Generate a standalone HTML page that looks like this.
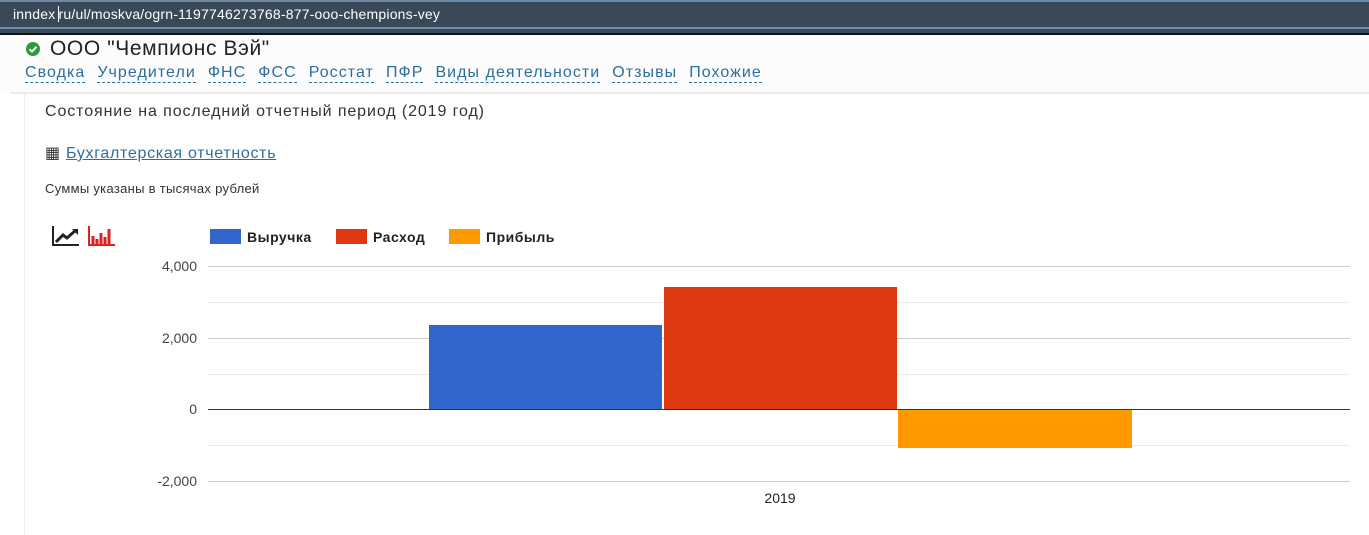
<!DOCTYPE html>
<html><head><meta charset="utf-8"><style>
body{margin:0;width:1369px;height:535px;overflow:hidden;background:#fff;font-family:"Liberation Sans","DejaVu Sans",sans-serif;position:relative}
.a{position:absolute;white-space:nowrap}
.nav a{color:#2d6f9e;text-decoration:none;border-bottom:1px dashed #2d6f9e;margin-right:12px;padding-bottom:1px}
</style></head><body>
<div class="a" style="left:0;top:0;width:1369px;height:2px;background:#6b8aa6"></div>
<div class="a" style="left:0;top:2px;width:1369px;height:25px;background:#3a4958"></div>
<div class="a" style="left:0;top:27px;width:1369px;height:2px;background:#6d8fae"></div>
<div class="a" style="left:0;top:29px;width:1369px;height:4px;background:#3a4958"></div>
<div class="a" style="left:0;top:33px;width:1369px;height:2px;background:#111"></div>
<div class="a" style="left:13px;top:6px;color:#fff;font-size:14px;letter-spacing:0.2px">inndex <span style="border-left:1px solid #fff;margin-left:-2px"></span>ru/ul/moskva/ogrn-1197746273768-877-ooo-chempions-vey</div>
<div class="a" style="left:0;top:35px;width:1369px;height:57px;background:#fcfcfc"></div>
<div class="a" style="left:10px;top:92px;width:1359px;height:2px;background:#ececec"></div>
<div class="a" style="left:24px;top:94px;width:1px;height:441px;background:#ececec"></div>
<div class="a" style="left:26px;top:42px;width:14px;height:14px;border-radius:50%;background:#2a9a3a"></div>
<svg class="a" style="left:26px;top:42px" width="14" height="14"><path d="M3.5 7.2L6 9.6L10.5 4.8" stroke="#fff" stroke-width="2" fill="none"/></svg>
<div class="a" style="left:50px;top:37px;font-size:21px;letter-spacing:0.6px;color:#222">ООО "Чемпионс Вэй"</div>
<div class="a nav" style="left:25px;top:64px;font-size:16px;letter-spacing:1.05px"><a>Сводка</a><a>Учредители</a><a>ФНС</a><a>ФСС</a><a>Росстат</a><a>ПФР</a><a>Виды деятельности</a><a>Отзывы</a><a>Похожие</a></div>
<div class="a" style="left:45px;top:103px;font-size:16px;letter-spacing:0.9px;color:#333">Состояние на последний отчетный период (2019 год)</div>
<div class="a" style="left:45px;top:143px;font-size:16px;letter-spacing:0.7px;color:#333">&#9638; <span style="color:#2d6f9e;text-decoration:underline">Бухгалтерская отчетность</span></div>
<div class="a" style="left:45px;top:181px;font-size:13px;letter-spacing:0.3px;color:#333">Суммы указаны в тысячах рублей</div>
<svg class="a" style="left:52px;top:225px" width="66" height="22">
<path d="M1 1V20H27" stroke="#222" stroke-width="2" fill="none"/><path d="M4 17L11 10L15 13L24 5" stroke="#222" stroke-width="3" fill="none"/><path d="M20 4H26V10Z" fill="#222"/>
<path d="M37 1V20H63" stroke="#d22" stroke-width="2" fill="none"/><path d="M41 11v8M45 14v5M49 8v11M53 12v7M57 4v15" stroke="#d22" stroke-width="3"/>
</svg>
<div class="a" style="left:210px;top:229px;width:31px;height:15px;background:#3366cc"></div>
<div class="a" style="left:247px;top:229px;font-size:14px;letter-spacing:0.5px;font-weight:bold;color:#222">Выручка</div>
<div class="a" style="left:336px;top:229px;width:31px;height:15px;background:#dc3912"></div>
<div class="a" style="left:373px;top:229px;font-size:14px;letter-spacing:0.5px;font-weight:bold;color:#222">Расход</div>
<div class="a" style="left:449px;top:229px;width:31px;height:15px;background:#ff9900"></div>
<div class="a" style="left:486px;top:229px;font-size:14px;letter-spacing:0.5px;font-weight:bold;color:#222">Прибыль</div>
<svg class="a" style="left:0;top:0" width="1369" height="535">
<g stroke="#ccc" stroke-width="1"><line x1="208" x2="1350" y1="266.5" y2="266.5"/><line x1="208" x2="1350" y1="338.5" y2="338.5"/><line x1="208" x2="1350" y1="481.5" y2="481.5"/></g>
<g stroke="#ebebeb" stroke-width="1"><line x1="208" x2="1350" y1="302.5" y2="302.5"/><line x1="208" x2="1350" y1="374.5" y2="374.5"/><line x1="208" x2="1350" y1="445.5" y2="445.5"/></g>
<rect x="429" y="325" width="233" height="84" fill="#3366cc"/>
<rect x="664" y="287" width="233" height="122" fill="#dc3912"/>
<rect x="898" y="409" width="234" height="39" fill="#ff9900"/>
<line x1="208" x2="1350" y1="409.5" y2="409.5" stroke="#333" stroke-width="1"/>
<g font-family="Liberation Sans,sans-serif" font-size="14" fill="#444" text-anchor="end"><text x="197" y="271">4,000</text><text x="197" y="343">2,000</text><text x="197" y="414">0</text><text x="197" y="486">-2,000</text></g>
<text x="780" y="503" font-family="Liberation Sans,sans-serif" font-size="14" fill="#222" text-anchor="middle">2019</text>
</svg>
</body></html>
